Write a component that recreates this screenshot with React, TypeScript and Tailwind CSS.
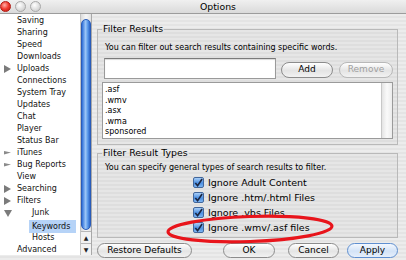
import type { ReactNode } from "react";

type TreeItem = {
  label: string;
  depth: 0 | 1;
  arrow?: "right" | "down" | "half";
  selected?: boolean;
};

const treeItems: TreeItem[] = [
  { label: "Saving", depth: 0 },
  { label: "Sharing", depth: 0 },
  { label: "Speed", depth: 0 },
  { label: "Downloads", depth: 0 },
  { label: "Uploads", depth: 0, arrow: "right" },
  { label: "Connections", depth: 0 },
  { label: "System Tray", depth: 0 },
  { label: "Updates", depth: 0 },
  { label: "Chat", depth: 0 },
  { label: "Player", depth: 0 },
  { label: "Status Bar", depth: 0 },
  { label: "iTunes", depth: 0, arrow: "half" },
  { label: "Bug Reports", depth: 0, arrow: "half" },
  { label: "View", depth: 0 },
  { label: "Searching", depth: 0, arrow: "right" },
  { label: "Filters", depth: 0, arrow: "right" },
  { label: "Junk", depth: 1, arrow: "down" },
  { label: "Keywords", depth: 1, selected: true },
  { label: "Hosts", depth: 1 },
  { label: "Advanced", depth: 0 },
];

const keywords = [".asf", ".wmv", ".asx", ".wma", "sponsored"];

const resultTypes = [
  "Ignore Adult Content",
  "Ignore .htm/.html Files",
  "Ignore .vbs Files",
  "Ignore .wmv/.asf files",
];

function TreeArrow({ kind }: { kind?: TreeItem["arrow"] }) {
  if (!kind) return null;
  if (kind === "down") {
    return (
      <svg width="8" height="7" viewBox="0 0 8 7" className="absolute left-[4px] top-[3px]">
        <path d="M0 0 L8 0 L4 7 Z" fill="#7b7b7b" />
      </svg>
    );
  }
  if (kind === "half") {
    return (
      <svg width="7" height="6" viewBox="0 0 7 6" className="absolute left-[4px] top-[3px]">
        <path d="M0 1 L7 2.5 L0 4.5 Z" fill="#8a8a8a" />
      </svg>
    );
  }
  return (
    <svg width="7" height="8" viewBox="0 0 7 8" className="absolute left-[4px] top-[2px]">
      <path d="M0 0 L7 4 L0 8 Z" fill="#7b7b7b" />
    </svg>
  );
}

function Sidebar() {
  return (
    <div className="flex h-[241px] w-[92px] border-r border-[#a8a8a8]">
      <ul className="w-[80px] bg-white pt-[1px] text-[8px] leading-[12px] text-[#111]">
        {treeItems.map((item) => (
          <li
            key={item.label}
            className={[
              "relative h-[12px] whitespace-nowrap",
              item.depth === 0 ? "pl-[17px]" : "pl-[29px]",
              item.label === "Keywords" ? "mt-[1px]" : "",
            ].join(" ")}
          >
            <TreeArrow kind={item.arrow} />
            <span
              className={
                item.selected
                  ? "inline-block w-[47px] bg-[#b6d3f7] pl-[3px] leading-[13px]"
                  : item.depth === 1
                    ? "pl-[3px]"
                    : ""
              }
            >
              {item.label}
            </span>
          </li>
        ))}
      </ul>
      <div className="flex w-[11px] flex-col border-l border-[#c4c4c4] bg-[linear-gradient(90deg,#dcdcdc,#f7f7f7_50%,#e2e2e2)]">
        <div className="mt-[5px] h-[211px] rounded-full border border-[#2a5cb8] bg-[linear-gradient(90deg,#2e6fd8,#9cc6f7_45%,#5c9bea_70%,#2a62c6)]" />
        <div className="mt-[1px] flex h-[12px] items-center justify-center border-t border-[#b8b8b8] bg-[#f2f2f2] text-[6px] text-[#222]">
          ▲
        </div>
        <div className="flex h-[12px] items-center justify-center border-t border-[#b8b8b8] bg-[#f2f2f2] text-[6px] text-[#222]">
          ▼
        </div>
      </div>
    </div>
  );
}

function PillButton({
  children,
  width,
  disabled,
  primary,
  height = "h-[16px]",
}: {
  children: ReactNode;
  width: string;
  disabled?: boolean;
  primary?: boolean;
  height?: string;
}) {
  return (
    <div
      className={[
        "flex items-center justify-center rounded-full border text-[9px]",
        width,
        height,
        primary
          ? "border-[#5f8fd0] bg-[linear-gradient(180deg,#f4f8fe,#d3e3f7_55%,#e6effb)]"
          : "border-[#8c8c8c] bg-[linear-gradient(180deg,#ffffff,#e4e4e4_55%,#f2f2f2)]",
        disabled ? "border-[#b8b8b8] text-[#a0a0a0]" : "text-black",
      ].join(" ")}
    >
      {children}
    </div>
  );
}

function CheckBox() {
  return (
    <div className="flex h-[11px] w-[11px] items-center justify-center rounded-[2px] border border-[#42679c] bg-[linear-gradient(180deg,#a9cff8,#4b8fe2_55%,#7db5f2)]">
      <svg width="10" height="10" viewBox="0 0 10 10">
        <path d="M1.5 5 L4 8 L9 0.5" fill="none" stroke="#1b2540" strokeWidth="1.8" />
      </svg>
    </div>
  );
}

function Group({ title, className, children }: { title: string; className: string; children: ReactNode }) {
  return (
    <fieldset className={["border border-[#b9b9b9] bg-black/[0.025] px-[4px]", className].join(" ")}>
      <legend className="px-[1px] text-[9.4px] leading-[12px] text-black">{title}</legend>
      {children}
    </fieldset>
  );
}

function Content() {
  return (
    <div className="flex w-[306px] flex-col pl-[5px]">
      <Group title="Filter Results" className="mt-[9px] h-[122px] w-[301px]">
        <p className="mt-[8px] pl-[3px] text-[8px] leading-[10px]">
          You can filter out search results containing specific words.
        </p>
        <div className="mt-[5px] flex items-start">
          <div className="ml-[2px] h-[21px] w-[172px] border border-[#9a9a9a] border-t-[#7a7a7a] bg-white shadow-[inset_0_1px_1px_rgba(0,0,0,0.15)]" />
          <div className="mt-[4px] ml-[5px] flex gap-[6px]">
            <PillButton width="w-[52px]">Add</PillButton>
            <PillButton width="w-[54px]" disabled>
              Remove
            </PillButton>
          </div>
        </div>
        <div className="mt-[3px] flex h-[57px] w-[291px] border border-[#9a9a9a] bg-white">
          <ul className="flex-1 pl-[2px] pt-[2px] text-[8px] leading-[10.5px]">
            {keywords.map((word) => (
              <li key={word}>{word}</li>
            ))}
          </ul>
          <div className="w-[11px] border-l border-[#c8c8c8] bg-[linear-gradient(90deg,#e4e4e4,#fafafa_50%,#ececec)]" />
        </div>
      </Group>
      <Group title="Filter Result Types" className="mt-[2px] h-[91px] w-[301px]">
        <p className="mt-[4px] pl-[3px] text-[8px] leading-[10px]">
          You can specify general types of search results to filter.
        </p>
        <ul className="mt-[2px] flex flex-col pl-[91px] text-[9.5px] leading-[15px]">
          {resultTypes.map((label) => (
            <li key={label} className="flex h-[15px] items-center gap-[4px] whitespace-nowrap">
              <CheckBox />
              <span>{label}</span>
            </li>
          ))}
        </ul>
      </Group>
      <div className="mt-[5px] flex items-center">
        <PillButton width="w-[96px]" height="h-[15px]">
          Restore Defaults
        </PillButton>
        <div className="ml-[31px] flex gap-[14px]">
          <PillButton width="w-[52px]" height="h-[15px]">
            OK
          </PillButton>
          <div className="-ml-[1px] flex gap-[8px]">
            <PillButton width="w-[51px]" height="h-[15px]">
              Cancel
            </PillButton>
            <PillButton width="w-[51px]" height="h-[15px]" primary>
              Apply
            </PillButton>
          </div>
        </div>
      </div>
    </div>
  );
}

export default function App() {
  return (
    <div className="relative h-[260px] w-[406px] overflow-hidden bg-[repeating-linear-gradient(0deg,#ececec_0px,#ececec_2px,#e4e4e4_2px,#e4e4e4_4px)] font-['DejaVu_Sans',sans-serif] text-black">
      <div className="flex h-[14px] items-center border-b border-[#9c9c9c] bg-[linear-gradient(180deg,#f0f0f0,#dadada)]">
        <div className="flex gap-[4px] pl-[0px]">
          <span className="h-[11px] w-[11px] rounded-full border border-[#b01810] bg-[radial-gradient(circle_at_40%_35%,#ffb0a8,#f03a2e_50%,#b81a10)]" />
          <span className="h-[11px] w-[11px] rounded-full border border-[#a8a8a8] bg-[radial-gradient(circle_at_40%_35%,#ffffff,#dedede_55%,#c4c4c4)]" />
          <span className="h-[11px] w-[11px] rounded-full border border-[#a8a8a8] bg-[radial-gradient(circle_at_40%_35%,#ffffff,#dedede_55%,#c4c4c4)]" />
        </div>
        <span className="ml-[159px] text-[9.3px] leading-[12px]">Options</span>
      </div>
      <div className="flex">
        <Sidebar />
        <Content />
      </div>
      <svg
        width="406"
        height="260"
        viewBox="0 0 406 260"
        className="pointer-events-none absolute left-0 top-0"
      >
        <ellipse
          cx="250"
          cy="229"
          rx="82"
          ry="12.5"
          transform="rotate(-2 250 229)"
          fill="none"
          stroke="#e8141b"
          strokeWidth="3.2"
        />
      </svg>
    </div>
  );
}
